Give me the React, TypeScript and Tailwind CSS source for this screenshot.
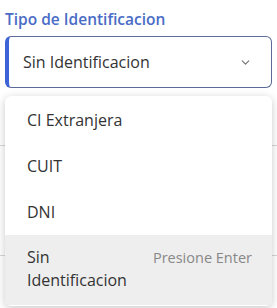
import { ChevronDown } from 'lucide-react';

const options = ['CI Extranjera', 'CUIT', 'DNI'];

export default function App() {
  return (
    <div className="relative h-[308px] w-[277px] overflow-hidden bg-white font-['Segoe_UI','Open_Sans',sans-serif]">
      {/* table lines behind the menu */}
      <div className="absolute left-0 right-0 top-[145px] h-px bg-[#d6d6d6]" />
      <div className="absolute left-0 right-0 top-[255px] h-px bg-[#d6d6d6]" />

      <div className="relative px-[5px] pt-[8px]">
        <label className="block text-[15.5px] font-semibold leading-[22px] text-[#4a6cc6]">
          Tipo de Identificacion
        </label>
        <div className="mt-[6px] flex h-[52px] items-center justify-between rounded-[6px] border border-[#5b6a96] border-l-[4px] border-l-[#3d63d8] pl-[14px] pr-[19px]">
          <span className="text-[16px] text-[#333]">Sin Identificacion</span>
          <ChevronDown className="h-[13px] w-[13px] text-[#777]" strokeWidth={2.2} />
        </div>

        <ul className="mt-[8px] overflow-hidden rounded-[6px] bg-white py-[1px] shadow-[0_2px_8px_rgba(0,0,0,0.22)]">
          {options.map((o) => (
            <li key={o} className="flex h-[46px] items-center px-[22px] text-[16px] text-[#333]">
              {o}
            </li>
          ))}
          <li className="flex items-start justify-between bg-[#eeeeee] pl-[22px] pr-[20px] pt-[11px] pb-[13px] text-[16px] leading-[23px] text-[#333]">
            <span>
              Sin
              <br />
              Identificacion
            </span>
            <span className="text-[14.5px] text-[#888]">Presione Enter</span>
          </li>
        </ul>
      </div>
    </div>
  );
}
